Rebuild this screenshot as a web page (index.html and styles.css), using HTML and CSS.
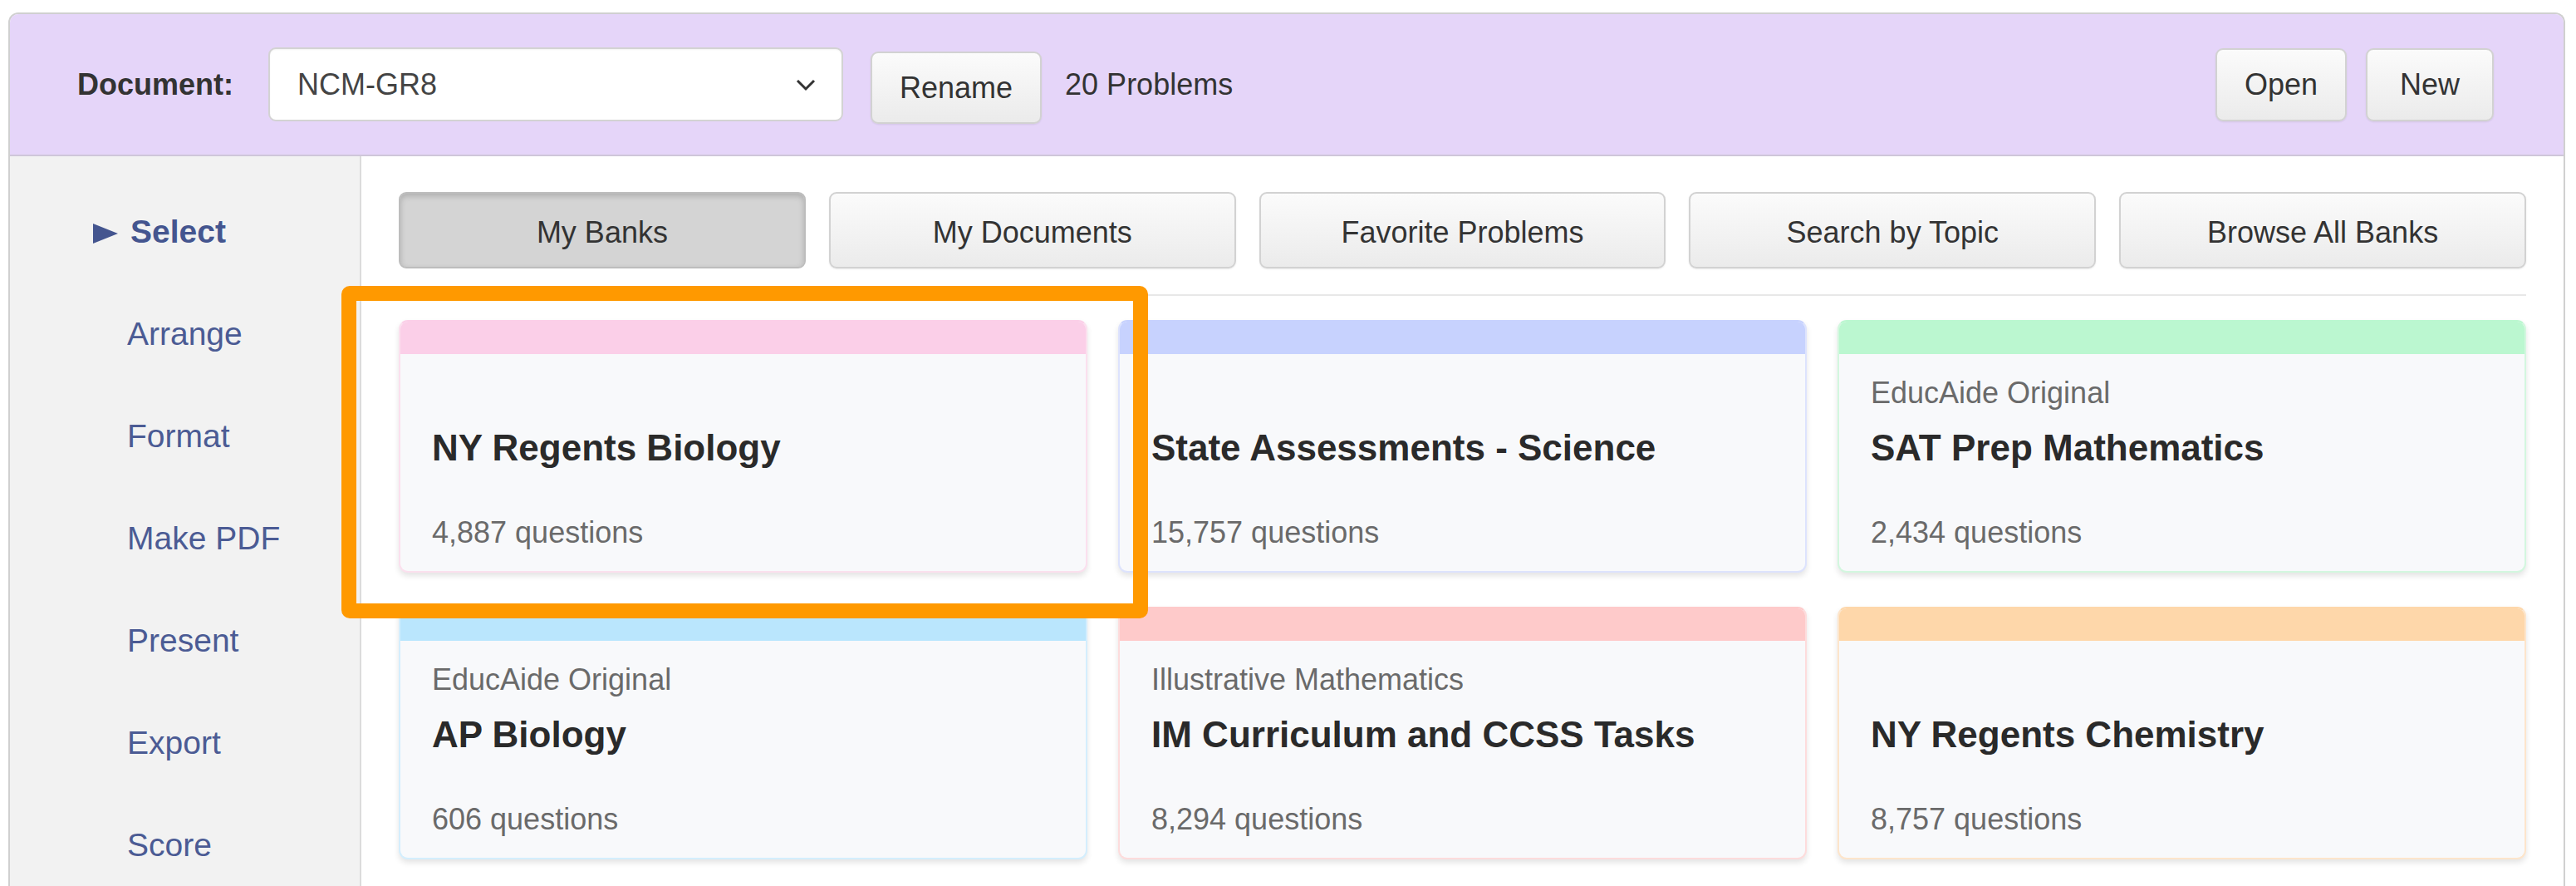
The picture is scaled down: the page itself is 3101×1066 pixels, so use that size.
FILE: index.html
```html
<!DOCTYPE html>
<html lang="en">
<head>
<meta charset="utf-8">
<title>Document Banks</title>
<link rel="stylesheet" href="styles.css">
</head>
<body>
<div class="app">
  <header class="topbar">
    <span class="doc-label">Document:</span>
    <div class="select">
      <span class="select-value">NCM-GR8</span>
      <svg class="chevron" width="24" height="16" viewBox="0 0 24 16"><polyline points="2,3 12,13 22,3" fill="none" stroke="#333" stroke-width="3"/></svg>
    </div>
    <button class="btn rename">Rename</button>
    <span class="problems">20 Problems</span>
    <div class="spacer"></div>
    <button class="btn">Open</button>
    <button class="btn">New</button>
  </header>
  <div class="main">
    <nav class="sidebar">
      <div class="nav-item active"><svg class="arrow" width="30" height="24" viewBox="0 0 30 24"><polygon points="0,0 30,12 0,24" fill="#44558f"/></svg>Select</div>
      <div class="nav-item">Arrange</div>
      <div class="nav-item">Format</div>
      <div class="nav-item">Make PDF</div>
      <div class="nav-item">Present</div>
      <div class="nav-item">Export</div>
      <div class="nav-item">Score</div>
    </nav>
    <section class="content">
      <div class="tabs">
        <button class="tab active">My Banks</button>
        <button class="tab">My Documents</button>
        <button class="tab">Favorite Problems</button>
        <button class="tab">Search by Topic</button>
        <button class="tab">Browse All Banks</button>
      </div>
      <div class="divider"></div>
      <div class="grid">
        <div class="card pink">
          <div class="strip"></div>
          <div class="card-body">
            <div class="label"></div>
            <div class="title">NY Regents Biology</div>
            <div class="count">4,887 questions</div>
          </div>
        </div>
        <div class="card indigo">
          <div class="strip"></div>
          <div class="card-body">
            <div class="label"></div>
            <div class="title">State Assessments - Science</div>
            <div class="count">15,757 questions</div>
          </div>
        </div>
        <div class="card green">
          <div class="strip"></div>
          <div class="card-body">
            <div class="label">EducAide Original</div>
            <div class="title">SAT Prep Mathematics</div>
            <div class="count">2,434 questions</div>
          </div>
        </div>
        <div class="card sky">
          <div class="strip"></div>
          <div class="card-body">
            <div class="label">EducAide Original</div>
            <div class="title">AP Biology</div>
            <div class="count">606 questions</div>
          </div>
        </div>
        <div class="card red">
          <div class="strip"></div>
          <div class="card-body">
            <div class="label">Illustrative Mathematics</div>
            <div class="title">IM Curriculum and CCSS Tasks</div>
            <div class="count">8,294 questions</div>
          </div>
        </div>
        <div class="card orange">
          <div class="strip"></div>
          <div class="card-body">
            <div class="label"></div>
            <div class="title">NY Regents Chemistry</div>
            <div class="count">8,757 questions</div>
          </div>
        </div>
      </div>
      <div class="highlight"></div>
    </section>
  </div>
</div>
</body>
</html>
```

FILE: styles.css
```css
html, body {
  margin: 0;
  padding: 0;
  background: #ffffff;
  height: 100%;
  overflow: hidden;
}

body {
  font-family: "Liberation Sans", Arial, sans-serif;
  color: #333333;
}

.app {
  margin: 15px 13px 0 10px;
  border: 2px solid #d0d0d0;
  border-bottom: none;
  border-radius: 12px 12px 0 0;
  height: calc(100vh - 15px);
  box-sizing: border-box;
  display: flex;
  flex-direction: column;
}

.topbar {
  height: 171px;
  box-sizing: border-box;
  background: #e5d5f9;
  border-bottom: 2px solid #cfc6d9;
  border-radius: 10px 10px 0 0;
  display: flex;
  align-items: center;
  padding: 0 84px 0 81px;
}

.doc-label {
  font-size: 36px;
  font-weight: bold;
  color: #333333;
  margin-right: 42px;
}

.select {
  width: 692px;
  height: 89px;
  box-sizing: border-box;
  background: #ffffff;
  border: 2px solid #d3d3d3;
  border-radius: 9px;
  display: flex;
  align-items: center;
  justify-content: space-between;
  padding: 0 31px 0 33px;
  font-size: 36px;
  color: #444444;
  margin-right: 33px;
  box-shadow: inset 0 1px 2px rgba(0,0,0,0.05);
}

.chevron {
  display: block;
}

.btn {
  font-family: "Liberation Sans", Arial, sans-serif;
  font-size: 36px;
  color: #333333;
  height: 88px;
  min-width: 154px;
  padding: 0 33px;
  background: linear-gradient(#fbfbfb, #ebebeb);
  border: 2px solid #d2d2d2;
  border-radius: 9px;
  box-shadow: 0 1px 2px rgba(0,0,0,0.08);
}

.rename {
  margin-top: 8px;
  height: 87px;
  margin-right: 28px;
}

.problems {
  font-size: 36px;
  color: #333333;
}

.spacer {
  flex: 1;
}

.btn + .btn {
  margin-left: 23px;
}

.main {
  flex: 1;
  display: flex;
  min-height: 0;
}

.sidebar {
  width: 421px;
  flex: none;
  background: #f2f2f2;
  border-right: 2px solid #dcdcdc;
  padding-top: 29px;
  box-sizing: content-box;
}

.nav-item {
  font-size: 39px;
  line-height: 123px;
  height: 123px;
  color: #4b5b94;
  padding-left: 141px;
  white-space: nowrap;
}

.nav-item.active {
  padding-left: 100px;
  font-weight: bold;
  color: #44558f;
}

.arrow {
  display: inline-block;
  margin-right: 15px;
  vertical-align: -1px;
}

.content {
  flex: 1;
  position: relative;
  padding: 43px 45px 0 45px;
  background: #ffffff;
}

.tabs {
  display: grid;
  grid-template-columns: repeat(5, 1fr);
  column-gap: 28px;
}

.tab {
  font-family: "Liberation Sans", Arial, sans-serif;
  font-size: 36px;
  color: #333333;
  height: 92px;
  padding-top: 6px;
  background: linear-gradient(#fbfbfb, #ebebeb);
  border: 2px solid #d2d2d2;
  border-radius: 9px;
  box-shadow: 0 1px 2px rgba(0,0,0,0.08);
}

.tab.active {
  background: #d4d4d4;
  border-color: #bdbdbd;
  box-shadow: inset 0 3px 7px rgba(0,0,0,0.18);
}

.divider {
  height: 2px;
  background: #e8e8e8;
  margin: 31px 0 29px;
}

.grid {
  display: grid;
  grid-template-columns: repeat(3, 1fr);
  column-gap: 37px;
  row-gap: 41px;
}

.card {
  background: #f8f9fb;
  border: 2px solid #e0e0e0;
  border-radius: 11px;
  overflow: hidden;
  box-shadow: 0 4px 7px rgba(0,0,0,0.11);
}

.strip {
  height: 39px;
}

.card-body {
  padding: 25px 38px 25px;
}

.label {
  font-size: 36px;
  line-height: 43px;
  height: 43px;
  color: #6a6a6a;
}

.title {
  font-size: 44px;
  line-height: 53px;
  font-weight: bold;
  color: #2a2a2a;
  margin-top: 18px;
  white-space: nowrap;
}

.count {
  font-size: 36px;
  line-height: 43px;
  color: #6a6a6a;
  margin-top: 54px;
}

.pink { border-color: #fbe0ee; border-top-color: #fbcfe8; }
.pink .strip { background: #fbcfe8; }
.indigo { border-color: #dde3fd; border-top-color: #c7d2fe; }
.indigo .strip { background: #c7d2fe; }
.green { border-color: #d3f7df; border-top-color: #bbf7d0; }
.green .strip { background: #bbf7d0; }
.sky { border-color: #d4eefd; border-top-color: #bae6fd; }
.sky .strip { background: #bae6fd; }
.red { border-color: #fddcdc; border-top-color: #fecaca; }
.red .strip { background: #fecaca; }
.orange { border-color: #fde5cb; border-top-color: #fed7aa; }
.orange .strip { background: #fed7aa; }

.highlight {
  position: absolute;
  left: -24px;
  top: 156px;
  width: 971px;
  height: 400px;
  box-sizing: border-box;
  border: 18px solid #ff9900;
  border-radius: 10px;
  pointer-events: none;
}
```
